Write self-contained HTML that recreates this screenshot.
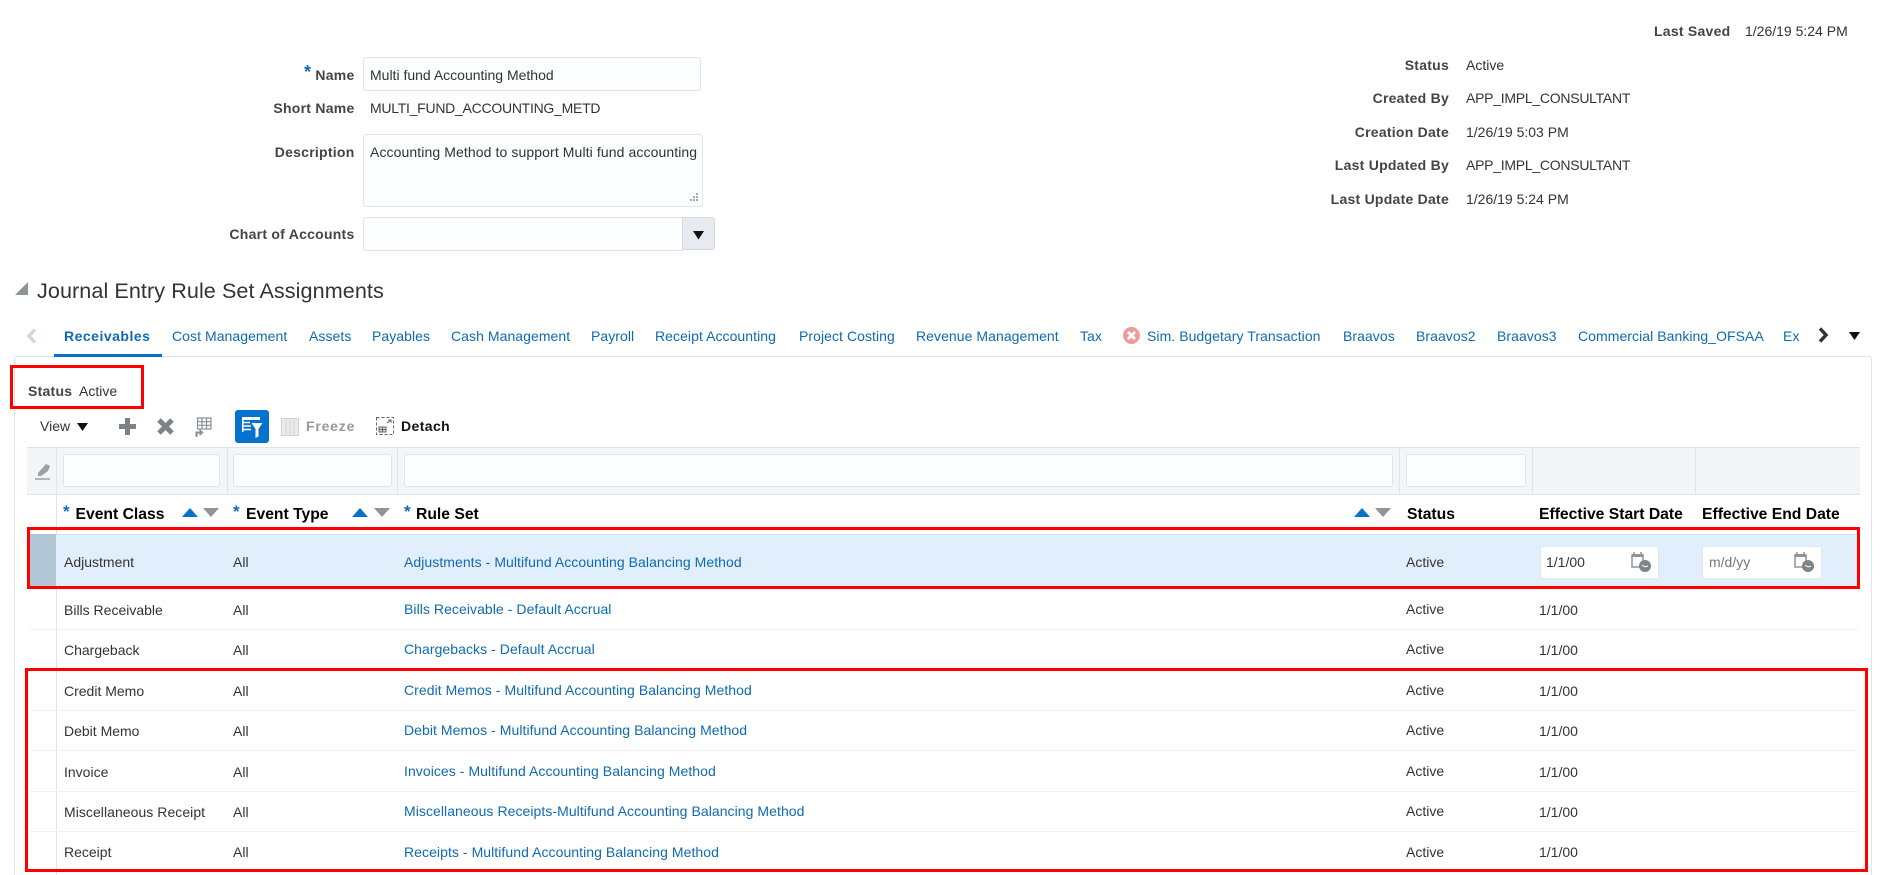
<!DOCTYPE html>
<html lang="en"><head><meta charset="utf-8"><title>Accounting Method</title>
<style>
html,body{margin:0;padding:0;background:#fff;width:1889px;height:875px;overflow:hidden}
#root{width:1889px;height:875px;position:relative;overflow:hidden;font-family:"Liberation Sans",Arial,sans-serif;font-size:14px;color:#333}
.t{position:absolute;line-height:20px;height:20px;white-space:nowrap}
.b{font-weight:bold;color:#444;letter-spacing:.25px}
.r{text-align:right}
.l{color:#0f6ab4;letter-spacing:.06px}
.u{letter-spacing:-.26px}
.h{font-weight:bold;font-size:15.7px;color:#000}
.s{color:#0f6ab4;font-weight:bold}
.box{position:absolute;box-sizing:border-box}
.inp{position:absolute;box-sizing:border-box;background:#fcfdfe;border:1px solid #dfe4ea;border-radius:3px}
.red{position:absolute;box-sizing:border-box;border:3.5px solid #fe0000;z-index:5}
.sep{position:absolute;height:1px;background:#eef0f2;left:30px;width:1828px}
.v{position:absolute;width:1px;background:#dfe4ea}
svg{position:absolute;overflow:visible}
</style></head><body><div id="root">

<!-- top-right -->
<div class="t b" style="left:1654px;top:21px">Last Saved</div>
<div class="t" style="left:1745px;top:21px">1/26/19 5:24 PM</div>

<div class="t b r" style="right:440px;top:55px">Status</div><div class="t" style="left:1466px;top:55px">Active</div>
<div class="t b r" style="right:440px;top:88px">Created By</div><div class="t u" style="left:1466px;top:88px">APP_IMPL_CONSULTANT</div>
<div class="t b r" style="right:440px;top:122px">Creation Date</div><div class="t" style="left:1466px;top:122px">1/26/19 5:03 PM</div>
<div class="t b r" style="right:440px;top:155px">Last Updated By</div><div class="t u" style="left:1466px;top:155px">APP_IMPL_CONSULTANT</div>
<div class="t b r" style="right:440px;top:189px">Last Update Date</div><div class="t" style="left:1466px;top:189px">1/26/19 5:24 PM</div>

<!-- left form -->
<div class="t b r" style="right:1534.5px;top:64px"><span class="s" style="font-size:18px;position:relative;top:-2px">*</span> Name</div>
<div class="inp" style="left:363px;top:57px;width:338px;height:34px"></div>
<div class="t" style="left:370px;top:65px">Multi fund Accounting Method</div>
<div class="t b r" style="right:1534.5px;top:98px">Short Name</div>
<div class="t u" style="left:370px;top:98px">MULTI_FUND_ACCOUNTING_METD</div>
<div class="t b r" style="right:1534.5px;top:142px">Description</div>
<div class="inp" style="left:363px;top:134px;width:340px;height:73px"></div>
<div class="t" style="left:370px;top:142px;letter-spacing:.1px">Accounting Method to support Multi fund accounting</div>
<svg style="left:688px;top:192px" width="12" height="12"><g fill="#aaa"><rect x="8" y="1" width="2" height="2"/><rect x="5" y="4" width="2" height="2"/><rect x="8" y="4" width="2" height="2"/><rect x="2" y="7" width="2" height="2"/><rect x="5" y="7" width="2" height="2"/><rect x="8" y="7" width="2" height="2"/></g></svg>
<div class="t b r" style="right:1534.5px;top:224px">Chart of Accounts</div>
<div class="inp" style="left:363px;top:217px;width:320px;height:34px;border-radius:3px 0 0 3px"></div>
<div class="box" style="left:682px;top:217px;width:33px;height:33px;background:#e7eaee;border:1px solid #d3d9df;border-radius:0 3px 3px 0"></div>
<svg style="left:693px;top:231px" width="11" height="9"><path d="M0 0H11L5.500 8.500Z" fill="#111"/></svg>

<!-- heading -->
<svg style="left:15px;top:282px" width="14" height="14"><path d="M13 0V13H0Z" fill="#8e9499"/></svg>
<div class="t" style="left:37px;top:280px;font-size:21.6px;color:#333;line-height:22px;letter-spacing:.07px">Journal Entry Rule Set Assignments</div>

<!-- tabs -->
<svg style="left:26px;top:328px" width="12" height="16"><path d="M9 1.500L3 8L9 14.500" fill="none" stroke="#d4d8dc" stroke-width="3.500"/></svg>
<div class="t" style="left:64px;top:326px;font-weight:bold;color:#0f6ab4;letter-spacing:.5px">Receivables</div>
<div class="box" style="left:54px;top:354px;width:108px;height:3px;background:#0572ce;z-index:2"></div>
<div class="t l" style="left:172px;top:326px">Cost Management</div>
<div class="t l" style="left:309px;top:326px">Assets</div>
<div class="t l" style="left:372px;top:326px">Payables</div>
<div class="t l" style="left:451px;top:326px">Cash Management</div>
<div class="t l" style="left:591px;top:326px">Payroll</div>
<div class="t l" style="left:655px;top:326px">Receipt Accounting</div>
<div class="t l" style="left:799px;top:326px">Project Costing</div>
<div class="t l" style="left:916px;top:326px">Revenue Management</div>
<div class="t l" style="left:1080px;top:326px">Tax</div>
<svg style="left:1123px;top:327px" width="17" height="17"><circle cx="8.500" cy="8.500" r="8.500" fill="#ed9c9c"/><path d="M5 5L12 12M12 5L5 12" stroke="#fff" stroke-width="2.800"/></svg>
<div class="t l" style="left:1147px;top:326px">Sim. Budgetary Transaction</div>
<div class="t l" style="left:1343px;top:326px">Braavos</div>
<div class="t l" style="left:1416px;top:326px">Braavos2</div>
<div class="t l" style="left:1497px;top:326px">Braavos3</div>
<div class="t l" style="left:1578px;top:326px">Commercial Banking_OFSAA</div>
<div class="t l" style="left:1783px;top:326px">Ex</div>
<svg style="left:1817px;top:327px" width="12" height="16"><path d="M3 1.500L9 8L3 14.500" fill="none" stroke="#333" stroke-width="3.500"/></svg>
<svg style="left:1849px;top:332px" width="11" height="9"><path d="M0 0H11L5.500 8Z" fill="#111"/></svg>

<!-- panel -->
<div class="box" style="left:14px;top:356px;width:1858px;height:530px;border:1px solid #dfe4ea;border-radius:3px"></div>

<div class="t b" style="left:28px;top:381px">Status</div>
<div class="t" style="left:79px;top:381px">Active</div>

<!-- toolbar -->
<div class="t" style="left:40px;top:416px">View</div>
<svg style="left:77px;top:423px" width="11" height="9"><path d="M0 0H11L5.500 8Z" fill="#111"/></svg>
<svg style="left:119px;top:418px" width="17" height="17"><path d="M8.500 0V17M0 8.500H17" stroke="#7c8287" stroke-width="5"/></svg>
<svg style="left:157px;top:418px" width="17" height="17"><path d="M2 2L15 15M15 2L2 15" stroke="#7c8287" stroke-width="5"/></svg>
<svg style="left:194px;top:416px" width="18" height="22" fill="none" stroke="#8a8f94" stroke-width="1.200"><rect x="3.500" y="2" width="13.500" height="11"/><path d="M3.500 5.700H17M3.500 9.300H17M8 2V13M12.500 2V13"/><path d="M2.500 21V16.500H7" stroke-width="2"/><path d="M5.500 14L8.500 16.500L5.500 19" stroke-width="1.500"/></svg>
<div class="box" style="left:235px;top:410px;width:34px;height:33px;background:#0572ce;border-radius:3px"></div>
<svg style="left:242px;top:417px" width="22" height="22"><g fill="none" stroke="#fff" stroke-width="1.500"><path d="M1 5.500H8M1 9H9M1 12.500H9"/></g><rect x="0" y="0" width="18" height="3" fill="#fff"/><path d="M0 0H1.500V15H0Z" fill="#fff"/><path d="M9.500 6H20.500L16.500 12V19.500L13.500 21V12Z" fill="#fff"/></svg>
<svg style="left:281px;top:418px" width="18" height="18" fill="#ececec" stroke="#cfcfcf" stroke-width="1"><rect x="0.500" y="0.500" width="17" height="17"/><path d="M5 2V16M9 2V16M13 2V16"/></svg>
<div class="t" style="left:306px;top:416px;font-weight:bold;color:#999;letter-spacing:.8px">Freeze</div>
<svg style="left:376px;top:417px" width="18" height="18" fill="none" stroke="#666" stroke-width="1"><rect x="0.500" y="0.500" width="17" height="17" stroke-dasharray="3 2"/><path d="M11 6L15 3M12 3H15V6"/><rect x="3" y="10" width="7" height="5" fill="#ddd"/><path d="M3 12.500H10M6.500 10V15"/></svg>
<div class="t" style="left:401px;top:416px;font-weight:bold;color:#111;letter-spacing:.4px">Detach</div>

<!-- filter row -->
<div class="box" style="left:27px;top:447px;width:1833px;height:48px;background:#f3f5f8;border-top:1px solid #dfe4ea;border-bottom:1px solid #dfe4ea"></div>
<div class="v" style="left:56px;top:447px;height:428px"></div>
<div class="v" style="left:227px;top:447px;height:48px"></div>
<div class="v" style="left:397px;top:447px;height:48px"></div>
<div class="v" style="left:1399px;top:447px;height:48px"></div>
<div class="v" style="left:1532px;top:447px;height:48px"></div>
<div class="v" style="left:1695px;top:447px;height:48px"></div>
<div class="inp" style="left:63px;top:454px;width:157px;height:33px"></div>
<div class="inp" style="left:233px;top:454px;width:159px;height:33px"></div>
<div class="inp" style="left:404px;top:454px;width:989px;height:33px"></div>
<div class="inp" style="left:1406px;top:454px;width:120px;height:33px"></div>
<svg style="left:35px;top:463px" width="16" height="17"><path d="M3 10L11 1L15 3L13 8L6 13L3 13Z" fill="#9ba0a5"/><path d="M0 16H15" stroke="#9ba0a5" stroke-width="1.500"/></svg>

<!-- header -->
<div class="t s" style="left:63px;top:502px;font-size:17px">*</div><div class="t h" style="left:75.500px;top:505px">Event Class</div>
<svg style="left:182px;top:508px" width="40" height="10"><path d="M0 9L8 0L16 9Z" fill="#0572ce"/><path d="M21 0H37L29 9Z" fill="#8e9499"/></svg>
<div class="t s" style="left:233px;top:502px;font-size:17px">*</div><div class="t h" style="left:246px;top:505px">Event Type</div>
<svg style="left:352px;top:508px" width="40" height="10"><path d="M0 9L8 0L16 9Z" fill="#0572ce"/><path d="M22 0H38L30 9Z" fill="#8e9499"/></svg>
<div class="t s" style="left:404px;top:502px;font-size:17px">*</div><div class="t h" style="left:416px;top:505px">Rule Set</div>
<svg style="left:1354px;top:508px" width="40" height="10"><path d="M0 9L8 0L16 9Z" fill="#0572ce"/><path d="M21 0H37L29 9Z" fill="#8e9499"/></svg>
<div class="t h" style="left:1407px;top:505px">Status</div>
<div class="t h" style="left:1539px;top:505px">Effective Start Date</div>
<div class="t h" style="left:1702px;top:505px">Effective End Date</div>

<!-- selected row -->
<div class="box" style="left:30px;top:534px;width:1828px;height:53px;background:#e1effc;border-top:1px solid #d5dfe8"></div>
<div class="box" style="left:30px;top:534px;width:26px;height:53px;background:#b2c6d6"></div>
<div class="t" style="left:64px;top:552px">Adjustment</div>
<div class="t" style="left:233px;top:552px">All</div>
<div class="t l" style="left:404px;top:552px">Adjustments - Multifund Accounting Balancing Method</div>
<div class="t" style="left:1406px;top:552px">Active</div>
<div class="inp" style="left:1540px;top:546px;width:119px;height:33px;background:#fff;border-color:#dfe8f0"></div>
<div class="t" style="left:1546px;top:552px">1/1/00</div>
<svg style="left:1631px;top:552px" width="20" height="20"><g fill="none" stroke="#8f9498" stroke-width="1.500"><rect x="1" y="3" width="11" height="12"/></g><rect x="1" y="2" width="11" height="3" fill="#8f9498"/><path d="M3 0V3M10 0V3" stroke="#8f9498" stroke-width="1.500"/><circle cx="14" cy="14" r="6" fill="#7f8488"/><path d="M11 13L14 15L17 14" stroke="#fff" stroke-width="1" fill="none"/></svg>
<div class="inp" style="left:1702px;top:546px;width:120px;height:33px;background:#fff;border-color:#dfe8f0"></div>
<div class="t" style="left:1709px;top:552px;color:#777">m/d/yy</div>
<svg style="left:1794px;top:552px" width="20" height="20"><g fill="none" stroke="#8f9498" stroke-width="1.500"><rect x="1" y="3" width="11" height="12"/></g><rect x="1" y="2" width="11" height="3" fill="#8f9498"/><path d="M3 0V3M10 0V3" stroke="#8f9498" stroke-width="1.500"/><circle cx="14" cy="14" r="6" fill="#7f8488"/><path d="M11 13L14 15L17 14" stroke="#fff" stroke-width="1" fill="none"/></svg>

<!-- rows -->
<div class="sep" style="top:629px"></div>
<div class="sep" style="top:669px"></div>
<div class="sep" style="top:710px"></div>
<div class="sep" style="top:750px"></div>
<div class="sep" style="top:791px"></div>
<div class="sep" style="top:831px"></div>

<div class="t" style="left:64px;top:600px">Bills Receivable</div><div class="t" style="left:233px;top:600px">All</div><div class="t l" style="left:404px;top:599px">Bills Receivable - Default Accrual</div><div class="t" style="left:1406px;top:599px">Active</div><div class="t" style="left:1539px;top:600px">1/1/00</div>

<div class="t" style="left:64px;top:640px">Chargeback</div><div class="t" style="left:233px;top:640px">All</div><div class="t l" style="left:404px;top:639px">Chargebacks - Default Accrual</div><div class="t" style="left:1406px;top:639px">Active</div><div class="t" style="left:1539px;top:640px">1/1/00</div>

<div class="t" style="left:64px;top:681px">Credit Memo</div><div class="t" style="left:233px;top:681px">All</div><div class="t l" style="left:404px;top:680px">Credit Memos - Multifund Accounting Balancing Method</div><div class="t" style="left:1406px;top:680px">Active</div><div class="t" style="left:1539px;top:681px">1/1/00</div>

<div class="t" style="left:64px;top:721px">Debit Memo</div><div class="t" style="left:233px;top:721px">All</div><div class="t l" style="left:404px;top:720px">Debit Memos - Multifund Accounting Balancing Method</div><div class="t" style="left:1406px;top:720px">Active</div><div class="t" style="left:1539px;top:721px">1/1/00</div>

<div class="t" style="left:64px;top:762px">Invoice</div><div class="t" style="left:233px;top:762px">All</div><div class="t l" style="left:404px;top:761px">Invoices - Multifund Accounting Balancing Method</div><div class="t" style="left:1406px;top:761px">Active</div><div class="t" style="left:1539px;top:762px">1/1/00</div>

<div class="t" style="left:64px;top:802px;letter-spacing:.05px">Miscellaneous Receipt</div><div class="t" style="left:233px;top:802px">All</div><div class="t l" style="left:404px;top:801px">Miscellaneous Receipts-Multifund Accounting Balancing Method</div><div class="t" style="left:1406px;top:801px">Active</div><div class="t" style="left:1539px;top:802px">1/1/00</div>

<div class="t" style="left:64px;top:842px">Receipt</div><div class="t" style="left:233px;top:842px">All</div><div class="t l" style="left:404px;top:842px">Receipts - Multifund Accounting Balancing Method</div><div class="t" style="left:1406px;top:842px">Active</div><div class="t" style="left:1539px;top:842px">1/1/00</div>

<!-- red annotations -->
<div class="red" style="left:10px;top:365px;width:134px;height:44px"></div>
<div class="red" style="left:27px;top:527px;width:1833px;height:62px"></div>
<div class="red" style="left:25px;top:668px;width:1843px;height:204px"></div>
</div></body></html>
